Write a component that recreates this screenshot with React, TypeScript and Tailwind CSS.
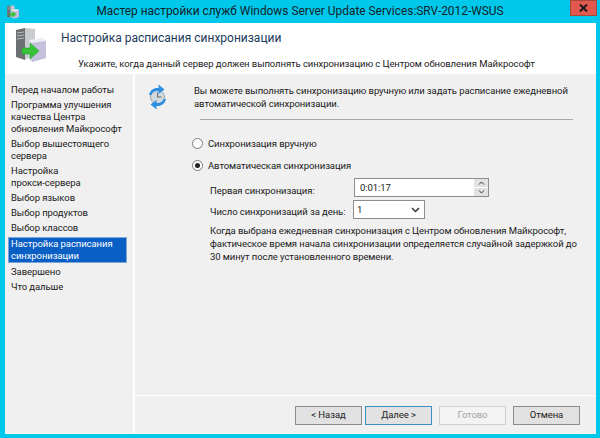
const navItems = [
  { label: ['Перед началом работы'] },
  { label: ['Программа улучшения', 'качества Центра', 'обновления Майкрософт'] },
  { label: ['Выбор вышестоящего', 'сервера'] },
  { label: ['Настройка', 'прокси-сервера'] },
  { label: ['Выбор языков'] },
  { label: ['Выбор продуктов'] },
  { label: ['Выбор классов'] },
  { label: ['Настройка расписания', 'синхронизации'], active: true },
  { label: ['Завершено'] },
  { label: ['Что дальше'] },
]

function WizardIcon({ size }: { size: number }) {
  return (
    <svg width={size} height={size} viewBox="0 0 36 36">
      <path d="M3 3 L12 1 L12 33 L3 30 Z" fill="#6d7073" />
      <path d="M12 1 L22 2 L22 27 L12 33 Z" fill="#c9cbcd" />
      <path d="M4 6 L11 5 M4 9 L11 8 M4 12 L11 11" stroke="#b9bcbe" strokeWidth="1" />
      <path d="M16 13 L29 11 L33 14 L33 31 L19 35 L16 32 Z" fill="#d5d3e6" />
      <path d="M16 13 L29 11 L33 14 L19 16 Z" fill="#eeedf6" />
      <path d="M19 16 L33 14 L33 31 L19 35 Z" fill="#c4c1dc" />
      <path d="M9 21 L17 21 L17 16 L26 24 L17 32 L17 27 L9 27 Z" fill="#37c436" stroke="#1b9a2a" strokeWidth="0.5" />
    </svg>
  )
}

function SyncIcon() {
  return (
    <svg width="19" height="26" viewBox="0 0 19 26">
      <circle cx="9.500" cy="13" r="7" fill="#d3d8dc" stroke="#9aa3aa" strokeWidth="1" />
      <path d="M9.500 8.500 L9.500 13 L13.500 13" stroke="#5d666e" strokeWidth="1" fill="none" />
      <path d="M1 11 C2 6 6 3.500 10.500 4 L10.500 0.500 L16.500 5.500 L10.500 10 L10.500 7 C7 6.500 4.500 8 3.500 11 Z" fill="#2c8fe0" />
      <path d="M18 15 C17 20 13 22.500 8.500 22 L8.500 25.500 L2.500 20.500 L8.500 16 L8.500 19 C12 19.500 14.500 18 15.500 15 Z" fill="#2c8fe0" />
    </svg>
  )
}

function Radio({ checked }: { checked?: boolean }) {
  return (
    <span className="flex h-[11px] w-[11px] shrink-0 items-center justify-center rounded-full border border-[#7a7a7a] bg-white">
      {checked && <span className="h-[5px] w-[5px] rounded-full bg-[#222]" />}
    </span>
  )
}

function WizardButton({ label, focused, disabled }: { label: string; focused?: boolean; disabled?: boolean }) {
  const tone = disabled
    ? 'border-[#cfcfcf] bg-[#f3f3f3] text-[#a3a3a3]'
    : focused
      ? 'border-[#3c8fc4] bg-[#e2e2e2] text-[#222]'
      : 'border-[#8c8c8c] bg-[#e1e1e1] text-[#222]'
  return (
    <div className={`flex h-[19px] w-[67px] items-center justify-center border text-[9.5px] tracking-[-0.08px] ${tone}`}>{label}</div>
  )
}

export default function App() {
  return (
    <div
      className="flex h-[438px] w-[600px] flex-col overflow-hidden bg-[#00c8ea] text-[#1a1a1a]"
      style={{ fontFamily: 'Roboto, "Open Sans", sans-serif' }}
    >
      {/* Title bar */}
      <div className="flex h-[23px] shrink-0 items-start">
        <div className="flex h-[23px] w-[40px] items-center pl-[6px]">
          <WizardIcon size={14} />
        </div>
        <div className="flex-1 whitespace-nowrap pt-[3px] text-center text-[11.9px] leading-[17px] text-[#10222a]">
          Мастер настройки служб Windows Server Update Services:SRV-2012-WSUS
        </div>
        <div className="flex h-[23px] w-[40px] items-start justify-end pr-[3px]">
          <div className="flex h-[16px] w-[27px] items-center justify-center border border-[#a8483f] bg-[#e0584e]">
            <svg width="9" height="8" viewBox="0 0 9 8">
              <path d="M1 0.500 L8 7.500 M8 0.500 L1 7.500" stroke="#1a1a1a" strokeWidth="2" />
            </svg>
          </div>
        </div>
      </div>

      {/* Window */}
      <div className="ml-[5px] mr-[4px] flex h-[411px] flex-col border-b border-[#fafafa] bg-[#f0f0f0]">
        {/* Header */}
        <div className="flex h-[51px] shrink-0 flex-col bg-white">
          <div className="flex">
            <div className="ml-[8px] mt-[4px] h-[36px] w-[36px]">
              <WizardIcon size={36} />
            </div>
            <div className="ml-[12px] mt-[5px] whitespace-nowrap text-[12px] leading-[20px] text-[#1c3a5a]">
              Настройка расписания синхронизации
            </div>
          </div>
          <div className="-mt-[7px] whitespace-nowrap pl-[73px] text-[9.5px] leading-[15px] tracking-[-0.08px]">
            Укажите, когда данный сервер должен выполнять синхронизацию с Центром обновления Майкрософт
          </div>
        </div>

        <div className="flex min-h-0 flex-1">
          {/* Steps */}
          <div className="flex w-[130px] shrink-0 flex-col gap-[3px] border-r-2 border-white pl-[3px] pt-[10px] text-[9.5px] leading-[12px] tracking-[-0.08px]">
            {navItems.map((item) => (
              <div
                key={item.label[0]}
                className={item.active ? 'mr-[6px] border border-[#7aa6d8] bg-[#0a5fc4] pl-[2px] text-white' : 'pl-[3px]'}
              >
                {item.label.map((line) => (
                  <div key={line} className="whitespace-nowrap">{line}</div>
                ))}
              </div>
            ))}
          </div>

          {/* Page */}
          <div className="flex min-w-0 flex-1 flex-col">
            <div className="flex-1 text-[9.5px] leading-[13px] tracking-[-0.08px]">
              <div className="flex pt-[10px]">
                <div className="ml-[13px] h-[26px] w-[46px] shrink-0">
                  <SyncIcon />
                </div>
                <div>
                  <div className="whitespace-nowrap">Вы можете выполнять синхронизацию вручную или задать расписание ежедневной</div>
                  <div className="whitespace-nowrap">автоматической синхронизации.</div>
                </div>
              </div>
              <div className="ml-[65px] mr-[23px] mt-[9px] h-px bg-[#a8a8a8]" />

              <div className="ml-[57px] mt-[17px] flex items-center gap-[5px]">
                <Radio />
                <span>Синхронизация вручную</span>
              </div>
              <div className="ml-[57px] mt-[9px] flex items-center gap-[5px]">
                <Radio checked />
                <span>Автоматическая синхронизация</span>
              </div>

              <div className="ml-[75px] mt-[6px] flex items-center">
                <span className="mt-[6px] w-[144px] whitespace-nowrap">Первая синхронизация:</span>
                <div className="flex h-[19px] w-[135px] items-center justify-between border border-[#8d8d8d] bg-white pl-[5px]">
                  <span>0:01:17</span>
                  <div className="flex h-full w-[15px] flex-col gap-px border-l border-white bg-white">
                    <div className="flex flex-1 items-center justify-center bg-[#e2e2e2]">
                      <svg width="7" height="4" viewBox="0 0 7 4"><path d="M1 3.500 L3.500 1 L6 3.500" fill="none" stroke="#333" /></svg>
                    </div>
                    <div className="flex flex-1 items-center justify-center bg-[#e2e2e2]">
                      <svg width="7" height="4" viewBox="0 0 7 4"><path d="M1 0.500 L3.500 3 L6 0.500" fill="none" stroke="#333" /></svg>
                    </div>
                  </div>
                </div>
              </div>

              <div className="ml-[75px] mt-[3px] flex items-center">
                <span className="mt-[4px] w-[143px] whitespace-nowrap">Число синхронизаций за день:</span>
                <div className="flex h-[19px] w-[72px] items-center justify-between border border-[#8d8d8d] bg-white pl-[3px] pr-[4px]">
                  <span>1</span>
                  <svg width="9" height="6" viewBox="0 0 9 6"><path d="M1 1 L4.500 4.500 L8 1" fill="none" stroke="#333" strokeWidth="1.500" /></svg>
                </div>
              </div>

              <div className="ml-[75px] mt-[5px]">
                <div className="whitespace-nowrap">Когда выбрана ежедневная синхронизация с Центром обновления Майкрософт,</div>
                <div className="whitespace-nowrap">фактическое время начала синхронизации определяется случайной задержкой до</div>
                <div className="whitespace-nowrap">30 минут после установленного времени.</div>
              </div>
            </div>

            {/* Buttons */}
            <div className="flex h-[38px] shrink-0 items-start justify-end border-t border-white pr-[16px] pt-[10px]">
              <WizardButton label="< Назад" />
              <div className="ml-[3px] flex"><WizardButton label="Далее >" focused /></div>
              <div className="ml-[7px] flex"><WizardButton label="Готово" disabled /></div>
              <div className="ml-[7px] flex"><WizardButton label="Отмена" /></div>
            </div>
          </div>
        </div>
      </div>
    </div>
  )
}
